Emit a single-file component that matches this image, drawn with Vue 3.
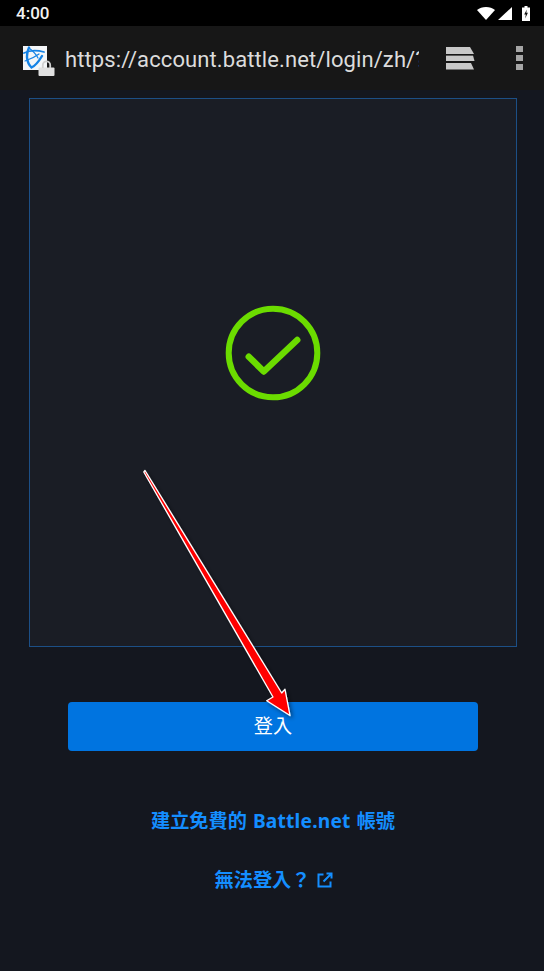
<script setup>
</script>

<template>
  <div class="page">
    <header class="status">
      <span class="time">4:00</span>
      <div class="status-icons">
        <svg class="wifi" width="18" height="13" viewBox="0 0 18 13"><path d="M0 3C2.400 1 5.500 0 9 0s6.600 1 9 3L9 13z" fill="#fff"/></svg>
        <svg class="signal" width="14" height="13" viewBox="0 0 14 13"><path d="M14 0V13H0z" fill="#fff"/></svg>
        <svg width="8" height="15" viewBox="0 0 8 15"><path d="M2.500 0H5.500V1.500H8V15H0V1.500H2.500z" fill="#fff"/><path d="M4.800 3.500L2.200 8.500H3.800L3.200 12.500L5.900 6.800H4.300z" fill="#111"/></svg>
      </div>
    </header>
    <nav class="toolbar">
      <div class="favicon">
        <svg class="fav" width="24" height="24" viewBox="0 0 24 24">
          <rect width="24" height="24" fill="#f4f6f8"/>
          <g fill="none" stroke="#1583e6" stroke-linecap="round">
            <path d="M6 1.500C3 8 3 16 8.500 21.500C12 20 16 15 19 10" stroke-width="2.400"/>
            <path d="M1 7C7 4 14 4 21 6" stroke-width="1.800"/>
            <path d="M6 2C10 5 13 8 15 12" stroke-width="1.200"/>
            <path d="M2 15C8 13 12 11 16 8" stroke-width="1.200"/>
          </g>
        </svg>
        <svg class="lock" width="17" height="16" viewBox="0 0 17 16">
          <rect x="0.500" y="7.500" width="16" height="8.500" rx="1" fill="#e0e0e0"/>
          <path d="M4.800 8V5a3.700 3.700 0 0 1 7.400 0V8" fill="none" stroke="#d0d0d0" stroke-width="1.800"/>
        </svg>
      </div>
      <div class="url">https://account.battle.net/login/zh/?ref=localhost</div>
      <svg class="tabs" width="29" height="23" viewBox="0 0 29 23">
        <path d="M0 0H24L28 7H0z" fill="#c8c8c8"/>
        <path d="M0 8.500H27L28.500 14H0z" fill="#c8c8c8"/>
        <path d="M0 16H25L28 22.500H0z" fill="#c8c8c8"/>
        <path d="M0 7.600H28M0 15.200H28" stroke="#171717" stroke-width="1.200"/>
      </svg>
      <div class="kebab"><i></i><i></i><i></i></div>
    </nav>
    <main class="content">
      <section class="captcha">
        <svg width="96" height="96" viewBox="0 0 96 96">
          <circle cx="48" cy="48" r="44.300" fill="none" stroke="#6bdc00" stroke-width="6"/>
          <path d="M23.800 51.700L38.800 66.500L72.200 35" fill="none" stroke="#6bdc00" stroke-width="6.500" stroke-linecap="round" stroke-linejoin="round"/>
        </svg>
      </section>
      <button class="login">登入</button>
      <a class="link first">建立免費的<span class="latin">Battle.net</span>帳號</a>
      <a class="link second"><span>無法登入？</span>
        <svg width="16" height="16" viewBox="0 0 16 16" fill="none" stroke="#148eff" stroke-width="2"><path d="M6.500 2.500H1.500V14.500H13.500V9.500"/><path d="M9.500 1.500H14.500V6.500M14.500 1.500L6.500 9.500"/></svg>
      </a>
    </main>
    <svg class="arrow" width="544" height="971" viewBox="0 0 544 971">
      <defs>
        <filter id="sh" x="-20%" y="-20%" width="140%" height="140%"><feDropShadow dx="2" dy="2" stdDeviation="2" flood-color="#000" flood-opacity="0.45"/></filter>
      </defs>
      <path d="M143.800 472L145 470.500L281.700 693L285 689.300L290 715.500L266.700 700.700L273 697Z" fill="#f00" stroke="#fff" stroke-width="1.300" stroke-linejoin="round" filter="url(#sh)"/>
    </svg>
  </div>
</template>

<style>
html, body { margin: 0; background: #14171f; }
</style>

<style scoped>
.page {
  position: relative;
  width: 544px;
  height: 971px;
  overflow: hidden;
  background: #14171f;
  font-family: "Noto Sans", "Noto Sans CJK TC", sans-serif;
}
.status {
  height: 26px;
  background: #000;
  display: flex;
  align-items: center;
  justify-content: space-between;
  padding: 0 14px 0 16px;
}
.time {
  font-family: Roboto, sans-serif;
  font-size: 17px;
  font-weight: 500;
  line-height: 24px;
  color: #f2f2f2;
}
.status-icons {
  display: flex;
  align-items: center;
}
.signal { margin: 0 10px 0 3px; }
.toolbar {
  height: 64px;
  background: #171717;
  display: flex;
  align-items: center;
  padding: 0 0 0 23px;
  box-sizing: border-box;
}
.favicon {
  position: relative;
  width: 24px;
  height: 24px;
  margin-right: 18px;
  flex: none;
}
.fav { display: block; }
.lock {
  position: absolute;
  left: 15px;
  top: 14px;
}
.url {
  width: 354px;
  overflow: hidden;
  white-space: nowrap;
  font-family: Roboto, sans-serif;
  font-size: 22px;
  letter-spacing: 0.1px;
  color: #dcdcdc;
  flex: none;
  padding-top: 2px;
}
.tabs {
  margin-left: 27px;
  flex: none;
}
.kebab {
  margin-left: 41px;
  display: flex;
  flex-direction: column;
  gap: 3px;
}
.kebab i {
  display: block;
  width: 7px;
  height: 6px;
  background: #a5a5a5;
}
.content {
  display: flex;
  flex-direction: column;
  align-items: center;
  padding: 8px 0 0 2px;
}
.captcha {
  width: 488px;
  height: 549px;
  box-sizing: border-box;
  border: 1px solid #1c4f86;
  background: #1a1d25;
  padding-bottom: 40px;
  display: flex;
  align-items: center;
  justify-content: center;
}
.login {
  width: 410px;
  height: 49px;
  margin-top: 55px;
  border: 0;
  border-radius: 4px;
  background: #0074e0;
  color: #fff;
  font-family: "Noto Sans CJK TC", sans-serif;
  font-size: 19.200px;
  line-height: 46px;
  padding: 0 0 3px;
}
.link {
  display: flex;
  align-items: center;
  justify-content: center;
  color: #148eff;
  font-weight: 700;
  font-size: 19.200px;
  line-height: 28px;
}
.latin {
  margin: 0 6px;
  letter-spacing: 0.2px;
}
.first { margin-top: 56px; }
.second {
  margin-top: 31px;
  gap: 7px;
  padding-left: 2px;
}
.arrow {
  position: absolute;
  left: 0;
  top: 0;
  pointer-events: none;
}
</style>
